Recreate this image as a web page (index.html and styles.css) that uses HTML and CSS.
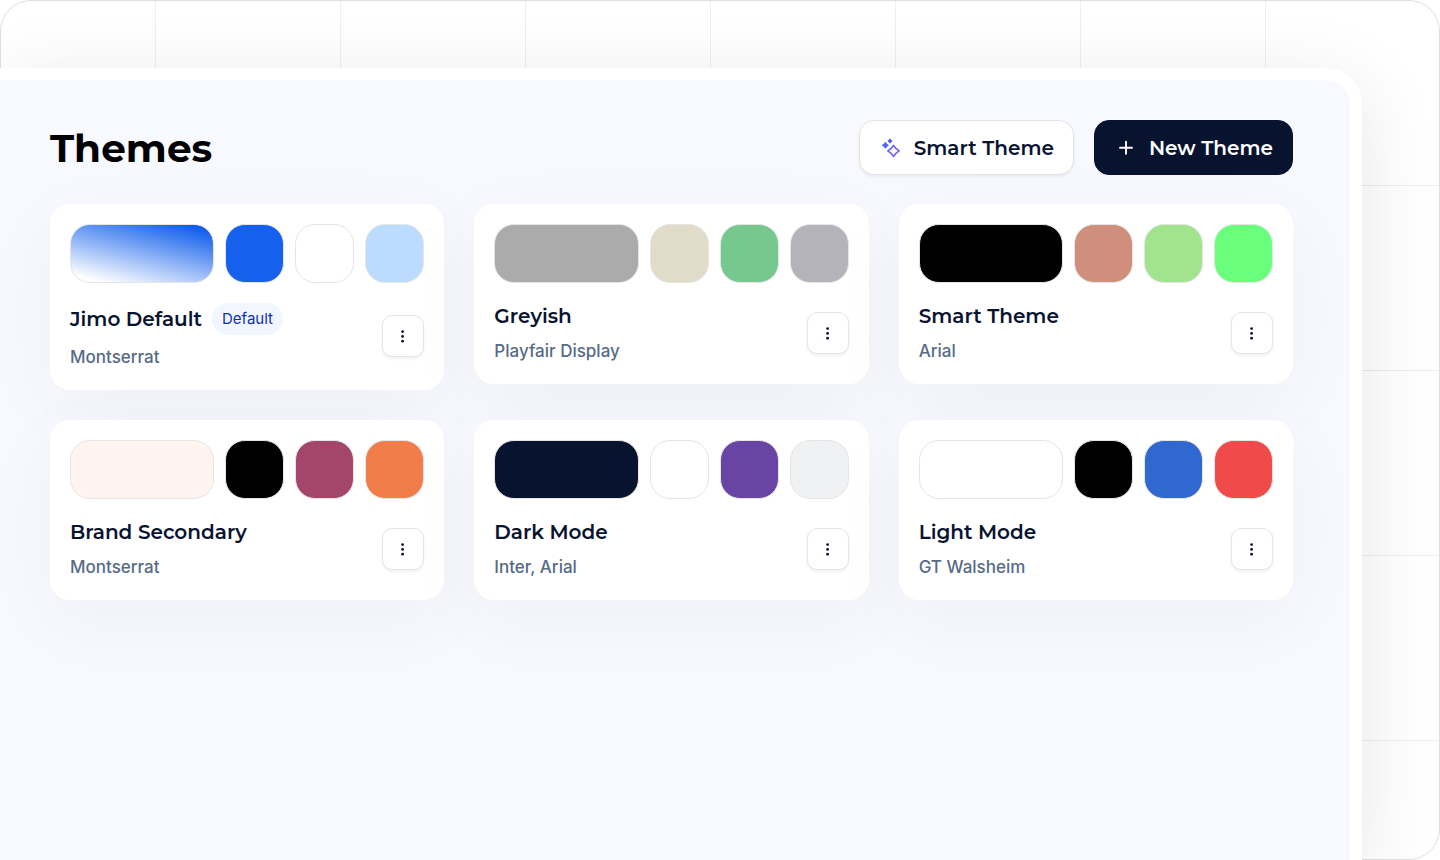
FILE: index.html
```html
<!DOCTYPE html>
<html lang="en">
<head>
<meta charset="utf-8">
<meta name="viewport" content="width=device-width, initial-scale=1">
<title>Themes</title>
<link rel="stylesheet" href="styles.css">
</head>
<body>
<svg class="sprite" aria-hidden="true">
  <symbol id="dots" viewBox="0 0 20 20"><circle cx="9.6" cy="5.6" r="1.4"/><circle cx="9.6" cy="10.4" r="1.4"/><circle cx="9.6" cy="15.2" r="1.4"/></symbol>
</svg>
<div class="frame">
  <main class="panel">
    <header class="header">
      <h1 class="title">Themes</h1>
      <div class="actions">
        <button class="btn btn-light" type="button">
          <svg class="icon" viewBox="0 0 20 20" aria-hidden="true">
            <defs><linearGradient id="spark" gradientUnits="userSpaceOnUse" x1="3" y1="3" x2="17" y2="17"><stop offset="0" stop-color="#4263f5"/><stop offset="1" stop-color="#8b5cf6"/></linearGradient></defs>
            <path fill="url(#spark)" stroke="url(#spark)" stroke-width="1.2" stroke-linejoin="round" d="M4.4 4.6L5.5 6.2L7.1 7.3L5.5 8.4L4.4 10L3.3 8.4L1.7 7.3L3.3 6.2ZM9 1.2L9.8 2.2L10.8 3L9.8 3.8L9 4.8L8.2 3.8L7.2 3L8.2 2.2Z"/>
            <path fill="none" stroke="url(#spark)" stroke-width="1.6" stroke-linejoin="round" d="M12.5 7.4L14.9 10.5L18.2 12.9L14.9 15.3L12.5 18.4L10.1 15.3L6.8 12.9L10.1 10.5Z"/>
          </svg>
          <span>Smart Theme</span>
        </button>
        <button class="btn btn-dark" type="button">
          <svg class="icon" viewBox="0 0 20 20" fill="none" stroke="currentColor" stroke-width="1.9" stroke-linecap="round" aria-hidden="true"><path d="M10 3.7v12M4 9.7h12"/></svg>
          <span>New Theme</span>
        </button>
      </div>
    </header>
    <section class="cards" aria-label="Themes">
      <article class="card">
        <div class="swatches"><i class="sw c-gradient"></i><i class="sw c-blue"></i><i class="sw c-white"></i><i class="sw c-sky"></i></div>
        <div class="info">
          <div class="text"><div class="name-row"><h2 class="name">Jimo Default</h2><span class="badge">Default</span></div><p class="font">Montserrat</p></div>
          <button class="more" type="button" aria-label="Options for Jimo Default"><svg class="icon"><use href="#dots"/></svg></button>
        </div>
      </article>
      <article class="card">
        <div class="swatches"><i class="sw c-grey"></i><i class="sw c-sand"></i><i class="sw c-green"></i><i class="sw c-silver"></i></div>
        <div class="info">
          <div class="text"><h2 class="name">Greyish</h2><p class="font">Playfair Display</p></div>
          <button class="more" type="button" aria-label="Options for Greyish"><svg class="icon"><use href="#dots"/></svg></button>
        </div>
      </article>
      <article class="card">
        <div class="swatches"><i class="sw c-black"></i><i class="sw c-clay"></i><i class="sw c-lime"></i><i class="sw c-neon"></i></div>
        <div class="info">
          <div class="text"><h2 class="name">Smart Theme</h2><p class="font">Arial</p></div>
          <button class="more" type="button" aria-label="Options for Smart Theme"><svg class="icon"><use href="#dots"/></svg></button>
        </div>
      </article>
      <article class="card">
        <div class="swatches"><i class="sw c-blush"></i><i class="sw c-black"></i><i class="sw c-plum"></i><i class="sw c-orange"></i></div>
        <div class="info">
          <div class="text"><h2 class="name">Brand Secondary</h2><p class="font">Montserrat</p></div>
          <button class="more" type="button" aria-label="Options for Brand Secondary"><svg class="icon"><use href="#dots"/></svg></button>
        </div>
      </article>
      <article class="card">
        <div class="swatches"><i class="sw c-navy"></i><i class="sw c-white"></i><i class="sw c-purple"></i><i class="sw c-mist"></i></div>
        <div class="info">
          <div class="text"><h2 class="name">Dark Mode</h2><p class="font">Inter, Arial</p></div>
          <button class="more" type="button" aria-label="Options for Dark Mode"><svg class="icon"><use href="#dots"/></svg></button>
        </div>
      </article>
      <article class="card">
        <div class="swatches"><i class="sw c-white"></i><i class="sw c-black"></i><i class="sw c-azure"></i><i class="sw c-red"></i></div>
        <div class="info">
          <div class="text"><h2 class="name">Light Mode</h2><p class="font">GT Walsheim</p></div>
          <button class="more" type="button" aria-label="Options for Light Mode"><svg class="icon"><use href="#dots"/></svg></button>
        </div>
      </article>
    </section>
  </main>
</div>
</body>
</html>
```

FILE: styles.css
```css
* { box-sizing: border-box; }

body {
  margin: 0;
  background: #fff;
  color: #081330;
  font-family: Inter, "Liberation Sans", sans-serif;
}

.sprite { display: none; }

.frame {
  display: flex;
  min-height: 100vh;
  border: 1px solid #dfdfdf;
  border-radius: 31px;
  background-color: #fff;
  background-image:
    linear-gradient(90deg, #efefef 1px, transparent 1px),
    linear-gradient(#ececec 1px, transparent 1px);
  background-size: 185px 185px;
  background-position: 154px 184px;
}

.panel {
  flex: 1;
  margin: 67px 77px -1px -1px;
  padding: 40px 57px 40px 50px;
  border: solid #fff;
  border-width: 12px 12px 0 0;
  border-radius: 0 36px 0 0;
  background: #f8f9ff;
  box-shadow: 0 16px 80px rgba(0, 0, 0, 0.1);
}

.header {
  display: flex;
  align-items: center;
  justify-content: space-between;
  margin-bottom: 29px;
}

.title {
  margin: 0;
  color: #000;
  font-family: Montserrat, Inter, sans-serif;
  font-size: 39px;
  font-weight: 700;
  line-height: 48px;
}

.actions { display: flex; gap: 20px; }

.btn {
  display: flex;
  align-items: center;
  justify-content: center;
  gap: 13px;
  height: 55px;
  padding: 0 19px 0 21px;
  border: 1px solid #e4e4e7;
  border-radius: 15px;
  font-family: Montserrat, Inter, sans-serif;
  font-size: 20px;
  font-weight: 600;
}

.btn-light {
  min-width: 214px;
  background: #fff;
  color: #081330;
  box-shadow: 0 2px 3px rgba(0, 0, 0, 0.06);
}

.btn-dark {
  min-width: 199px;
  border-color: #081330;
  background: #081330;
  color: #fff;
}

.icon { width: 20px; height: 20px; flex: none; }

.cards {
  display: grid;
  grid-template-columns: repeat(3, 1fr);
  align-items: start;
  gap: 30px;
}

.card {
  padding: 20px 20px 21px;
  border-radius: 20px;
  background: #fff;
  box-shadow: 0 20px 80px rgba(20, 30, 40, 0.04);
}

.swatches {
  display: grid;
  grid-template-columns: 1fr repeat(3, 59px);
  gap: 11px;
  margin-bottom: 20px;
}

.sw {
  height: 59px;
  border: 1px solid #e5e5e5;
  border-radius: 20px;
}

.c-gradient { background: linear-gradient(194deg, #0a5aeb 5%, #fff 92%); }
.c-blue { background: #1560ed; }
.c-white { background: #fff; }
.c-sky { background: #bbdcff; }
.c-grey { background: #ababab; }
.c-sand { background: #e1dbc9; }
.c-green { background: #77c88f; }
.c-silver { background: #b4b3b9; }
.c-black { background: #000; }
.c-clay { background: #d08e7c; }
.c-lime { background: #a2e38e; }
.c-neon { background: #69ff7c; }
.c-blush { background: #fff4f0; }
.c-plum { background: #a3466a; }
.c-orange { background: #f07d4a; }
.c-navy { background: #081330; }
.c-purple { background: #6845a3; }
.c-mist { background: #f0f1f3; }
.c-azure { background: #3168cf; }
.c-red { background: #f04b4a; }

.info {
  display: flex;
  align-items: center;
  justify-content: space-between;
}

.text { display: grid; gap: 10px; }

.name-row { display: flex; align-items: center; gap: 10px; }

.name {
  margin: 0;
  font-family: Montserrat, Inter, sans-serif;
  font-size: 20px;
  font-weight: 600;
  line-height: 26px;
}

.badge {
  padding: 0 10px;
  border-radius: 16px;
  background: #f2f7ff;
  color: #0b2fb8;
  font-size: 15px;
  line-height: 32px;
}

.font {
  margin: 0;
  color: #566b85;
  font-size: 17px;
  font-weight: 500;
  line-height: 24px;
}

.more {
  display: grid;
  place-items: center;
  width: 42px;
  height: 42px;
  padding: 0;
  border: 1px solid #e5e5e8;
  border-radius: 10px;
  background: #fff;
  color: #081330;
  fill: currentColor;
  box-shadow: 0 2px 3px rgba(0, 0, 0, 0.06);
}
```
